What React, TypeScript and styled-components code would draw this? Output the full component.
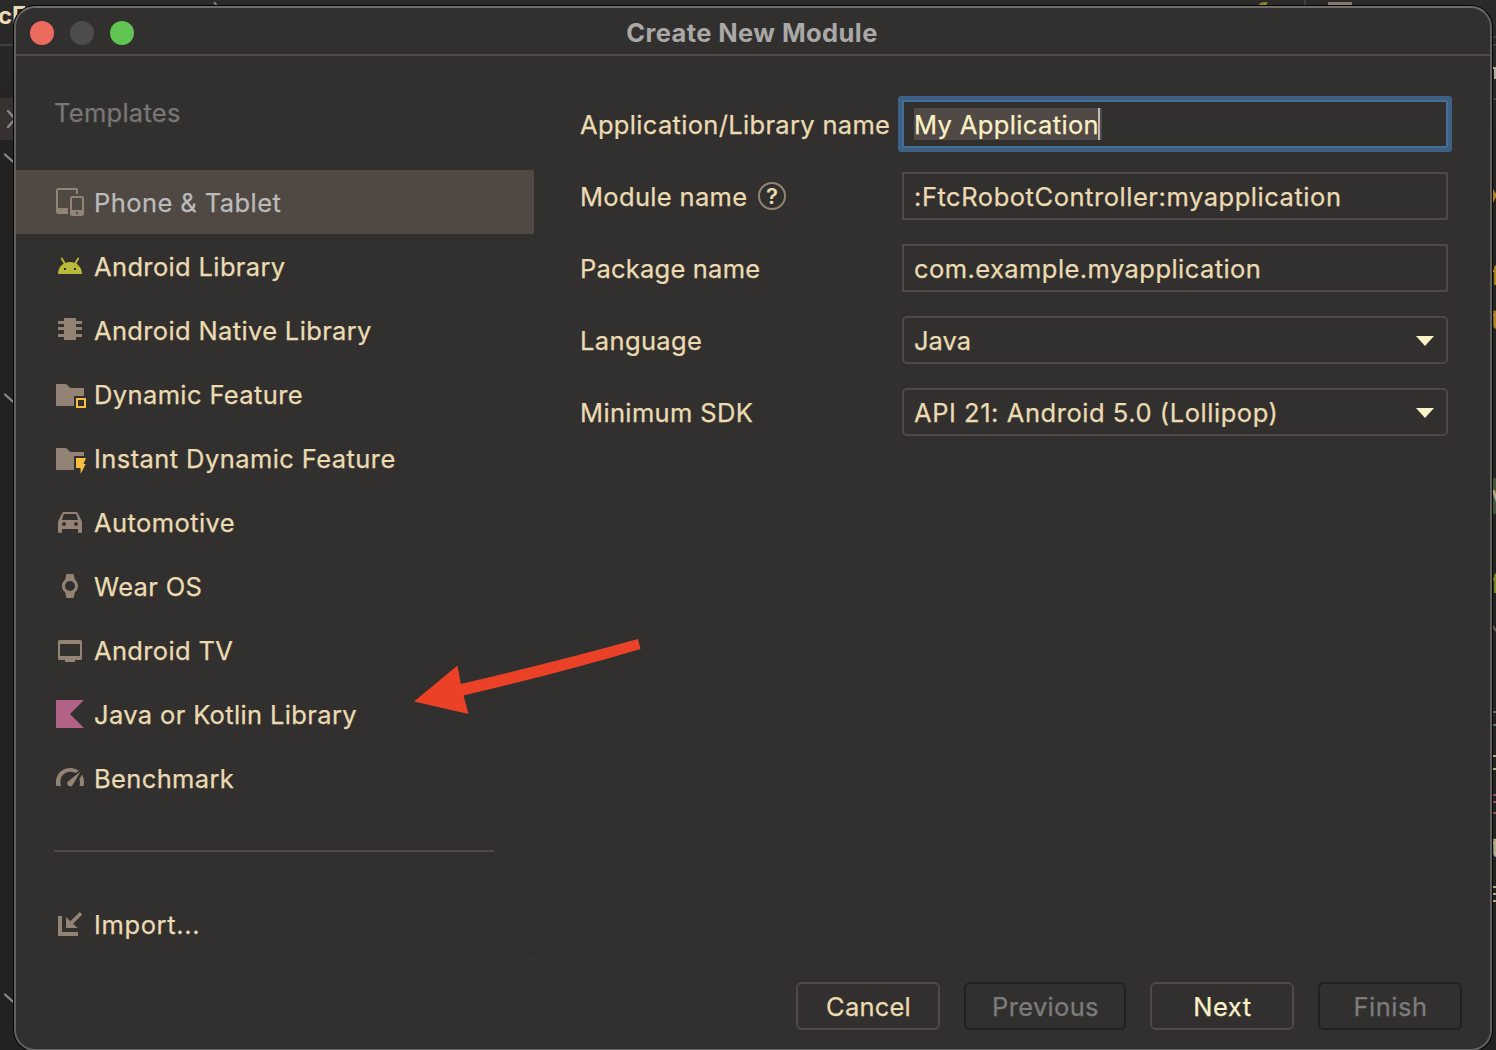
import React from "react";
import styled, { createGlobalStyle, css } from "styled-components";

const color = {
  bg: "#32302f",
  line: "#504945",
  text: "#ebdbb2",
  bright: "#fbf1c7",
  muted: "#7c7c7c",
  icon: "#928374",
  yellow: "#fabd3f",
};

const GlobalStyle = createGlobalStyle`
  * { box-sizing: border-box; }
  body {
    margin: 0;
    overflow: hidden;
    background: #262524;
    font-family: Inter, "Liberation Sans", sans-serif;
    font-size: 25.5px;
    line-height: 32px;
    color: ${color.text};
  }
`;

const Desktop = styled.div`
  position: relative;
  height: 1050px;
  overflow: hidden;
  padding: 6px 4px 0 14px;
  background: linear-gradient(to bottom, #2b2a29 0, #282726 60px, #232221 160px, #232221 100%);
`;

/* Editor window, seen only at the edges of the dialog */
const EditorLayer = styled.div`
  position: absolute;
  inset: 0;
`;

const Sliver = styled.svg`
  display: block;
`;

const TabName = styled.span`
  position: absolute;
  left: -2px;
  top: 0;
  font-size: 24px;
  font-weight: 700;
`;

const EdgeText = styled.span<{ $top: number; $color: string; $bg?: string }>`
  position: absolute;
  left: 1491px;
  top: ${(p) => p.$top}px;
  width: 12px;
  height: 36px;
  line-height: 36px;
  font-size: 26px;
  font-weight: 500;
  color: ${(p) => p.$color};
  background: ${(p) => p.$bg ?? "transparent"};
`;

const Dialog = styled.main`
  position: relative;
  display: flex;
  flex-direction: column;
  height: 1045px;
  border: 2px solid #63615f;
  border-top-color: #706e6c;
  border-radius: 21px;
  background: ${color.bg};
  box-shadow: 0 0 0 1px #050505;
  overflow: hidden;
`;

const TitleBar = styled.header`
  display: grid;
  grid-template-columns: 1fr auto 1fr;
  align-items: center;
  height: 48px;
  flex: none;
  padding: 3px 2px 0 0;
  border-bottom: 2px solid ${color.line};
`;

const Lights = styled.div`
  display: flex;
  gap: 16px;
  padding: 1px 0 0 14px;
`;

const Light = styled.span<{ $color: string }>`
  width: 24px;
  height: 24px;
  border-radius: 50%;
  background: ${(p) => p.$color};
`;

const Title = styled.h1<{ $track: number }>`
  margin: 0;
  font-size: 25.5px;
  font-weight: 700;
  line-height: 32px;
  letter-spacing: ${(p) => p.$track}px;
  color: #a9a8a7;
`;

const Body = styled.div`
  display: flex;
  height: 902px;
  flex: none;
`;

const Sidebar = styled.nav`
  display: flex;
  flex-direction: column;
  width: 519px;
  flex: none;
  border-right: 1px solid #2f2d2c;
`;

const SidebarTitle = styled.h2<{ $track: number }>`
  margin: 0;
  padding: 41px 0 41px 38px;
  font-size: 25.5px;
  font-weight: 400;
  line-height: 32px;
  letter-spacing: ${(p) => p.$track}px;
  -webkit-text-stroke: 0.25px currentColor;
  color: #787776;
`;

const Item = styled.div<{ $selected?: boolean }>`
  display: flex;
  align-items: center;
  gap: 8px;
  height: 64px;
  flex: none;
  padding-left: 38px;
  ${(p) =>
    p.$selected &&
    css`
      background: #4f4843;
      color: #bbbbbb;
    `}
`;

const Label = styled.span<{ $track: number }>`
  padding-top: 2px;
  letter-spacing: ${(p) => p.$track}px;
  white-space: nowrap;
  -webkit-text-stroke: 0.25px currentColor;
`;

const Rule = styled.hr`
  width: 440px;
  height: 2px;
  flex: none;
  margin: 40px 0 40px 38px;
  border: 0;
  background: ${color.line};
`;

const Glyph = styled.svg`
  width: 32px;
  height: 32px;
  flex: none;
  fill: ${color.icon};
  overflow: visible;
`;

const Form = styled.section`
  display: grid;
  grid-template-columns: 322px 546px;
  grid-auto-rows: 48px;
  row-gap: 24px;
  align-items: center;
  align-content: start;
  padding: 44px 0 0 45px;
`;

const FieldLabel = styled.label`
  display: flex;
  align-items: center;
  gap: 10.6px;
`;

const Field = styled.div<{ $focus?: boolean }>`
  display: flex;
  align-items: center;
  height: 48px;
  padding-left: 10px;
  border: 2px solid ${color.line};
  ${(p) =>
    p.$focus &&
    css`
      border-color: #466d94;
      box-shadow: 0 0 0 4px #3d6185;
      border-radius: 1px;
      color: ${color.bright};
    `}
`;

const Combo = styled(Field)`
  justify-content: space-between;
  padding-right: 12px;
  border-radius: 5px;
`;

const Selection = styled.span`
  display: flex;
  width: 188px;
  height: 32px;
  background: ${color.line};
`;

const SelectedText = styled(Label)`
  display: block;
  width: 186px;
  height: 32px;
  padding-top: 1px;
  border-right: 2px solid #bbbbbb;
`;

const HelpMark = styled.span`
  display: grid;
  place-items: center;
  width: 28px;
  height: 28px;
  border: 2px solid ${color.icon};
  border-radius: 50%;
  font-size: 22px;
  font-weight: 600;
  line-height: 24px;
`;

const Caret = styled.svg`
  width: 18px;
  height: 10px;
  margin-top: 2px;
  fill: ${color.bright};
`;

const Footer = styled.footer`
  display: flex;
  justify-content: flex-end;
  gap: 24px;
  padding: 22px 28px 0 0;
  border-top: 2px solid #333131;
`;

const Button = styled.button<{ $width: number; $bright?: boolean }>`
  display: flex;
  align-items: center;
  justify-content: center;
  width: ${(p) => p.$width}px;
  height: 48px;
  padding: 0 0 0 1px;
  border: 2px solid ${color.line};
  border-radius: 6px;
  background: transparent;
  font: inherit;
  color: ${(p) => (p.$bright ? color.bright : color.text)};
  &:disabled {
    border-color: #1f2122;
    color: ${color.muted};
  }
`;

const Pointer = styled.svg`
  position: absolute;
  left: 414px;
  top: 638px;
  width: 228px;
  height: 78px;
  fill: #eb4127;
`;

const icons = {
  phone: (
    <path
      fillRule="evenodd"
      d="M4.500 2H22q2 0 2 2v4h-2V4H4v18h10v6H4.500Q2 28 2 25.500V4.500Q2 2 4.500 2zM18.500 10h9Q30 10 30 12.500v15Q30 30 27.500 30h-9Q16 30 16 27.500v-15Q16 10 18.500 10zM18 12v12h10V12zM22 26v2h2v-2z"
    />
  ),
  android: (
    <g>
      <path d="M7.800 8.500 11 14M24.200 8.500 21 14" stroke="#b8bb3a" strokeWidth="1.900" strokeLinecap="round" />
      <path fill="#b8bb3a" fillRule="evenodd" d="M4 24C4 17 9 12 16 12s12 5 12 12zM10 18v2h2v-2zM20 18v2h2v-2z" />
    </g>
  ),
  chip: <path d="M10 4h12v22H10zM4 7h6v3H4zM4 13h6v3H4zM4 20h6v3H4zM22 7h6v3h-6zM22 13h6v3h-6zM22 20h6v3h-6z" />,
  dynamic: (
    <g>
      <path d="M2 6h9q1.500 0 2.500 1l2.800 3H30v8H20v10H2z" />
      <path fill={color.yellow} fillRule="evenodd" d="M22 20h10v10H22zM24 22v6h6v-6z" />
    </g>
  ),
  instant: (
    <g>
      <path d="M2 6h9q1.500 0 2.500 1l2.800 3H30v4H20v14H2z" />
      <path fill={color.yellow} d="M22 16h10l-2.500 6h2.200L26.600 32 26.500 26H22z" />
    </g>
  ),
  car: (
    <path
      fillRule="evenodd"
      d="M8 7.400Q8.500 6 10 6h12q1.500 0 2 1.400L28 15.500v10.200q0 1.300-1.300 1.300h-1.400Q24 27 24 25.700V23H8v2.700Q8 27 6.700 27H5.300Q4 27 4 25.700V15.500zM9.800 8 8 14h16l-1.800-6zM10 16a2 2 0 1 0 0 4 2 2 0 0 0 0-4zM22 16a2 2 0 1 0 0 4 2 2 0 0 0 0-4z"
    />
  ),
  watch: (
    <path
      fillRule="evenodd"
      d="M12.500 4h7l1.500 5.700C22.900 11.200 24 13.500 24 16s-1.100 4.800-3 6.300L19.500 28h-7L11 22.300C9.100 20.800 8 18.500 8 16s1.100-4.800 3-6.300zM16 11a5 5 0 1 0 0 10 5 5 0 0 0 0-10z"
    />
  ),
  tv: <path fillRule="evenodd" d="M5.500 6h21Q28 6 28 7.500v17q0 1.500-1.500 1.500H21v2H11v-2H5.500Q4 26 4 24.500v-17Q4 6 5.500 6zM6 10v12h20V10z" />,
  kotlin: <path fill="#b16286" d="M2 2h28L16 16l14 14H2z" />,
  gauge: (
    <g>
      <path d="M2.300 24C1 18 3 12.500 7 9.200 12.500 4.800 20 5 25 8.800L21.500 11C16.500 8.500 11.500 9.800 8.800 13 6.300 16 5.800 19.500 7 24z" />
      <path d="M26.500 9.500 18.900 22.800a3 3 0 1 1-5-3.300z" />
      <path d="M28.100 12.500C30 16 30.500 20 29.600 24H25.500C26.200 21.500 26.100 19 25.400 17z" />
    </g>
  ),
  import: <path d="M4 8h4v16h16v4H4zM12 9l4.300 4.300L25.800 4l2.500 2.600-9.300 9.200L23.800 20H12z" />,
};

type IconName = keyof typeof icons;

const templates: { icon: IconName; name: string; track: number }[] = [
  { icon: "phone", name: "Phone & Tablet", track: 0.43 },
  { icon: "android", name: "Android Library", track: 0.36 },
  { icon: "chip", name: "Android Native Library", track: 0.35 },
  { icon: "dynamic", name: "Dynamic Feature", track: 0.38 },
  { icon: "instant", name: "Instant Dynamic Feature", track: 0.42 },
  { icon: "car", name: "Automotive", track: 0.42 },
  { icon: "watch", name: "Wear OS", track: 0.33 },
  { icon: "tv", name: "Android TV", track: 0.34 },
  { icon: "kotlin", name: "Java or Kotlin Library", track: 0.36 },
  { icon: "gauge", name: "Benchmark", track: 0.36 },
];

const Icon = ({ name }: { name: IconName }) => <Glyph viewBox="0 0 32 32">{icons[name]}</Glyph>;

const DropCaret = () => (
  <Caret viewBox="0 0 18 10">
    <path d="M0 0h18L9 10z" />
  </Caret>
);

function Editor() {
  return (
    <EditorLayer>
      <Sliver width="1496" height="1050" fill="none" strokeWidth="2">
        <path d="M0 98h14v42H0z" fill="#37322f" />
        <path d="M0 45h14" stroke="#453f3b" />
        <path d="M8 111l7 8-7 8M5 154.500l10 9M5 394.500l10 9M5 994.500l10 9" stroke="#8b8a88" strokeWidth="2.200" strokeLinecap="round" />
        <path d="M214 2l3 4" stroke="#8a7f68" />
        <path d="M1258 5q4-4 10-2.500L1266 5z" fill="#8a8a20" />
        <path d="M1305 0v6" stroke="#453f3b" />
        <path d="M1328 2h24v3h-24z" fill="#86786a" />
        <path d="M1492 37h4M1492 45h4M1492 99h4" stroke="#454341" />
        <path d="M1492 68h3v11" stroke="#b0a898" />
        <path d="M1493 189l4 6-4 8z" fill="#b5821e" />
        <path d="M1492 625l4 6" stroke="#6f665c" />
        <path d="M1492 712h4M1492 725h4" stroke="#5a7a6c" />
        <path d="M1492 756h4M1492 769h4M1492 887h4M1492 894h4M1492 901h4" stroke="#b5a985" />
        <path d="M1492 795h4M1492 802h4M1492 813h4" stroke="#97506f" />
      </Sliver>
      <TabName>cF</TabName>
      <EdgeText $top={258} $color="#b5821e">f</EdgeText>
      <EdgeText $top={302} $color="#b5821e">t</EdgeText>
      <EdgeText $top={478} $color="#b5a985" $bg="#44553a">v</EdgeText>
      <EdgeText $top={566} $color="#84851e">f</EdgeText>
      <EdgeText $top={830} $color="#b5a985">t</EdgeText>
    </EditorLayer>
  );
}

export default function App() {
  return (
    <Desktop>
      <GlobalStyle />
      <Editor />
      <Dialog>
        <TitleBar>
          <Lights>
            <Light $color="#ed6a5e" />
            <Light $color="#4d4c4b" />
            <Light $color="#61c554" />
          </Lights>
          <Title $track={0.41}>Create New Module</Title>
        </TitleBar>
        <Body>
          <Sidebar>
            <SidebarTitle $track={0.28}>Templates</SidebarTitle>
            {templates.map((t, i) => (
              <Item key={t.name} $selected={i === 0}>
                <Icon name={t.icon} />
                <Label $track={t.track}>{t.name}</Label>
              </Item>
            ))}
            <Rule />
            <Item>
              <Icon name="import" />
              <Label $track={0.63}>Import...</Label>
            </Item>
          </Sidebar>
          <Form>
            <FieldLabel>
              <Label $track={0.32}>Application/Library name</Label>
            </FieldLabel>
            <Field $focus>
              <Selection>
                <SelectedText $track={0.37}>My Application</SelectedText>
              </Selection>
            </Field>
            <FieldLabel>
              <Label $track={0.33}>Module name</Label>
              <HelpMark>?</HelpMark>
            </FieldLabel>
            <Field>
              <Label $track={0.54}>:FtcRobotController:myapplication</Label>
            </Field>
            <FieldLabel>
              <Label $track={0.21}>Package name</Label>
            </FieldLabel>
            <Field>
              <Label $track={0.43}>com.example.myapplication</Label>
            </Field>
            <FieldLabel>
              <Label $track={0.36}>Language</Label>
            </FieldLabel>
            <Combo>
              <Label $track={0}>Java</Label>
              <DropCaret />
            </Combo>
            <FieldLabel>
              <Label $track={0.36}>Minimum SDK</Label>
            </FieldLabel>
            <Combo>
              <Label $track={0.55}>API 21: Android 5.0 (Lollipop)</Label>
              <DropCaret />
            </Combo>
          </Form>
        </Body>
        <Footer>
          <Button $width={144}>
            <Label $track={0.21}>Cancel</Label>
          </Button>
          <Button $width={162} disabled>
            <Label $track={0.33}>Previous</Label>
          </Button>
          <Button $width={144} $bright>
            <Label $track={0.53}>Next</Label>
          </Button>
          <Button $width={144} disabled>
            <Label $track={0.51}>Finish</Label>
          </Button>
        </Footer>
      </Dialog>
      <Pointer viewBox="414 638 228 78">
        <path d="M414 701.500 457.500 665.500 460.800 684Q555 662 638 639L640.500 649Q560 673 463.500 695.500L468.500 714z" />
      </Pointer>
    </Desktop>
  );
}
